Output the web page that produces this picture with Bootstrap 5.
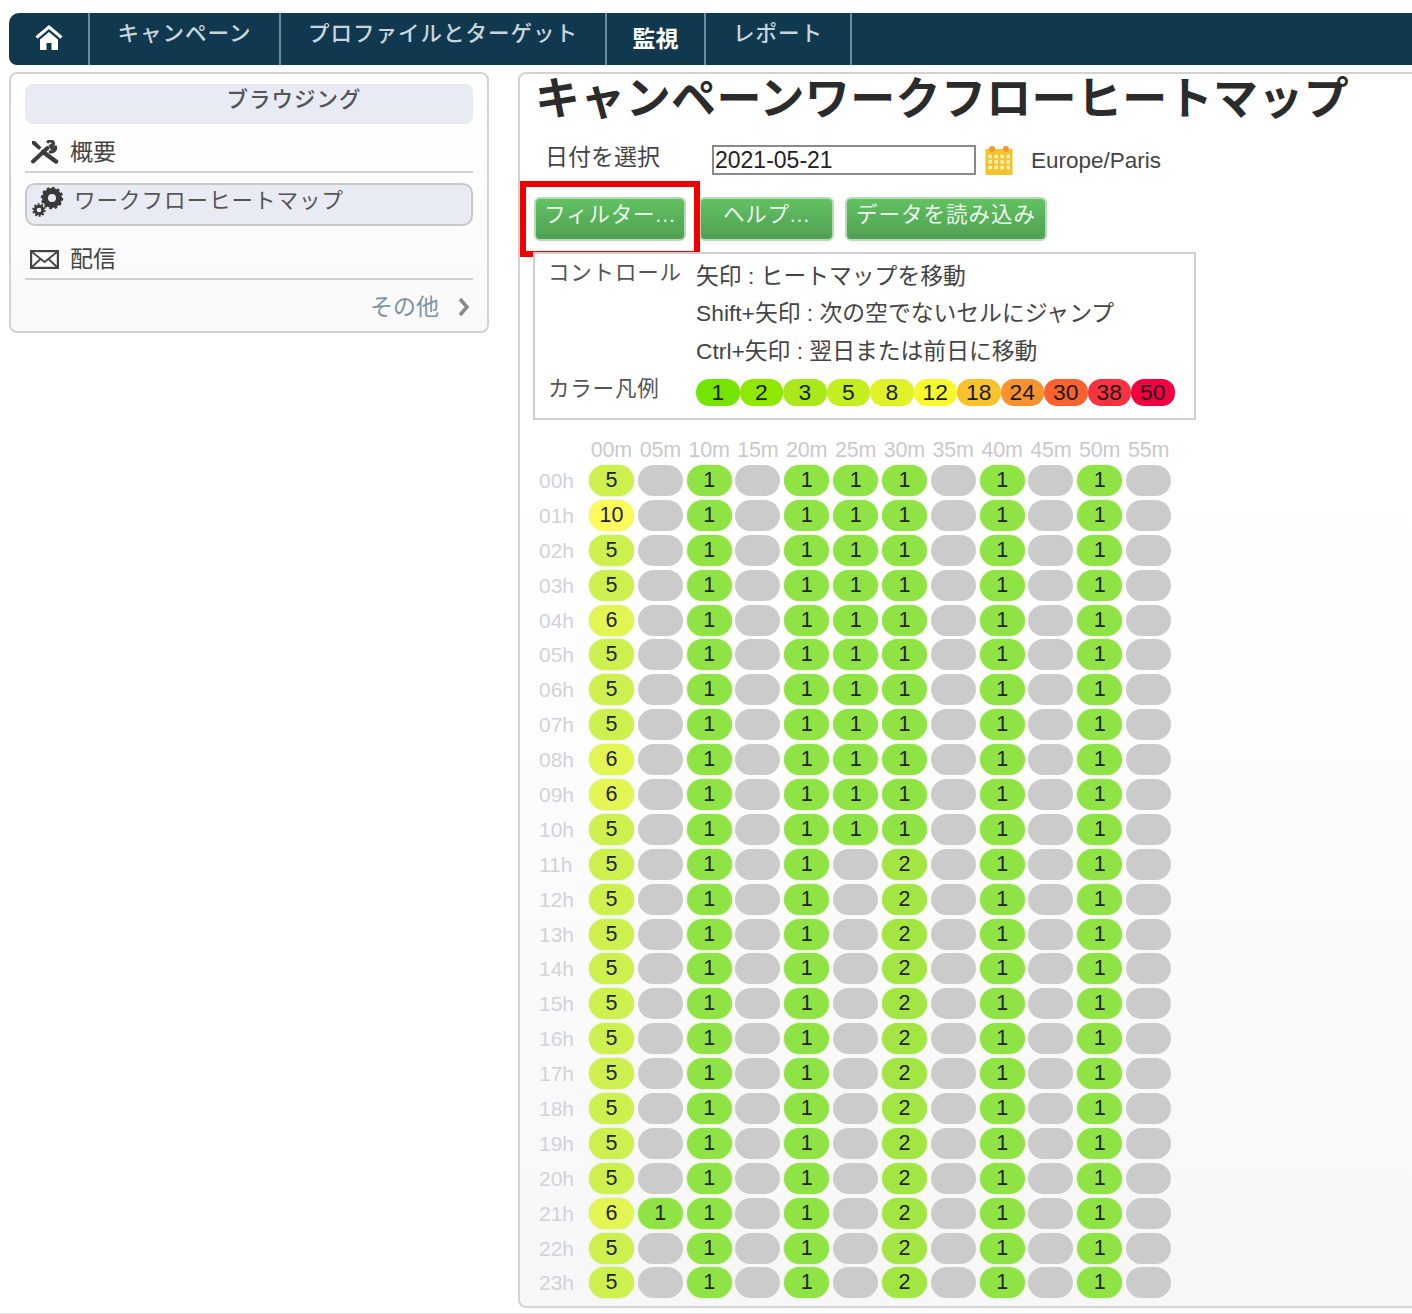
<!DOCTYPE html>
<html lang="ja">
<head>
  <meta charset="UTF-8">
  <title>キャンペーンワークフローヒートマップ</title>
  <link href="https://cdn.jsdelivr.net/npm/bootstrap@5.3.2/dist/css/bootstrap.min.css" rel="stylesheet">
  <style>
    html, body { height: 1314px; overflow: hidden; }
    body {
      font-family: "Liberation Sans", "Noto Sans CJK JP", sans-serif;
      color: #444;
      background: #fff;
    }
    .page-wrap { padding: 13px 0 0 9px; height: 1300px; border-bottom: 1px solid #e4e4e4; box-sizing: content-box; }
    .top-bar { height: 52px; background: #10384f; border-radius: 10px 0 0 8px; }
    .top-item {
      display: flex; align-items: center; justify-content: center;
      height: 52px; border-right: 2px solid #6f8a9a;
      color: #c9d5dc; font-size: 21.5px; font-weight: 500; letter-spacing: 1px;
      text-decoration: none; padding-bottom: 9px;
    }
    .top-item.on { color: #fff; font-weight: 700; letter-spacing: 0; font-size: 23px; padding-bottom: 0; }
    .w-home { width: 81px; padding-bottom: 4px; }
    .w-camp { width: 191px; }
    .w-prof { width: 326px; }
    .w-mon { width: 99px; }
    .w-rep { width: 146px; }
    .content-row { margin-top: 7px; gap: 29px; }
    .side-box {
      width: 480px; height: 261px; flex: none;
      border: 2px solid #d2d2d2; border-radius: 8px;
      padding: 10px 14px 0;
      background: linear-gradient(#fff, #f9f9f9);
    }
    .side-head {
      height: 40px; background: #e8ebf4; border-radius: 8px;
      text-align: center; padding-left: 90px;
      font-size: 21.5px; line-height: 32px; font-weight: 500; letter-spacing: 1px; color: #555;
    }
    .side-link {
      display: flex; align-items: center; gap: 11px; height: 38px; margin-top: 11px;
      border-bottom: 2px solid #d0d0d0; padding: 0 0 2px 5px;
      font-size: 23px; color: #444;
    }
    .side-link.active-item {
      height: 43px; margin-top: 10px; background: #e8ebf4;
      border: 2px solid #c8c8c8; border-radius: 10px;
      font-size: 21.5px; letter-spacing: 1px; gap: 9px; padding-bottom: 7px; color: #555;
    }
    .side-link.active-item svg { margin-bottom: -5px; }
    .side-link.after-active { margin-top: 14px; height: 40px; padding-bottom: 0; }
    .side-more {
      display: flex; justify-content: flex-end; align-items: center; gap: 19px;
      margin-top: 10px; padding-right: 3px;
      font-size: 23px; color: #7b93a5; line-height: 34px;
    }
    .main-box {
      flex: 1 1 auto; height: 1236px; margin-right: -10px;
      border: 2px solid #d2d2d2; border-radius: 8px 0 0 8px;
      background: linear-gradient(#fff 30%, #f7f7f7);
      position: relative;
    }
    .page-title {
      margin: 0 0 25px 15px; height: 46px; padding-top: 3px;
      font-size: 45px; line-height: 46px; font-weight: 700; color: #2b2b2b; white-space: nowrap; letter-spacing: .35px;
    }
    .date-row { height: 30px; margin-bottom: 22px; align-items: center; font-size: 23px; }
    .date-label { width: 167px; margin-left: 25px; margin-top: -6px; }
    .date-field {
      width: 264px; height: 30px; padding: 0 1px; border: 2px solid #8a8a8a; background: #fff;
      font: 23px/26px "Liberation Sans", sans-serif; color: #222;
    }
    .date-zone { margin-left: 17px; color: #444; font-size: 22.5px; padding-top: 2px; }
    .btn-row { height: 44px; margin: 0 0 12px 14px; }
    .btn-green {
      height: 44px; padding: 0 0 7px; color: #eef7ee;
      background: linear-gradient(#62c162, #4fa052);
      border: 2px solid #b5dcb5; border-radius: 6px;
      font-size: 21.5px; letter-spacing: .8px; line-height: 1.2;
    }
    .btn-green:hover { color: #fff; background: #4fa052; }
    .b-filter { width: 152px; margin-right: 13px; }
    .b-help { width: 135px; margin-right: 11px; }
    .b-load { width: 202px; letter-spacing: 1px; }
    .red-mark {
      position: absolute; left: 0; top: 107px; width: 180px; height: 76px;
      border: 6px solid #f00000; pointer-events: none;
    }
    .help-box {
      width: 663px; height: 168px; margin: -1px 0 0 13px; position: relative;
      border: 2px solid #cfcfcf; background: #fff; padding: 3px 14px 0 13px;
      font-size: 22.8px;
    }
    .help-line { display: flex; height: 37.5px; align-items: center; }
    .help-box .lbl { width: 148px; flex: none; color: #555; letter-spacing: .8px; margin-top: -5px; font-size: 21.5px; }
    .legend-row { display: flex; height: 35px; align-items: center; margin-top: 5px; }
    .legend-row .pills { display: flex; }
    .lg { width: 43.5px; height: 27px; border-radius: 13px; text-align: center; line-height: 27px; color: #1a1a1a; }
    .heat {
      display: grid; margin: 15px 0 0 13px;
      grid-template-columns: 54px repeat(12, 48.83px);
      grid-template-rows: 28px repeat(24, 34.9px);
      font-size: 21.5px; color: #222;
    }
    .heat-top { color: #c9c9c9; text-align: center; white-space: nowrap; letter-spacing: -.2px; line-height: 30px; }
    .heat-side { color: #d2d2d8; padding-left: 6px; line-height: 35px; font-size: 21px; }
    .pill {
      width: 45px; height: 31px; margin-left: 2px; margin-top: 2px;
      border-radius: 15.5px; text-align: center; line-height: 31px; color: #222;
    }
    .pill.lit { box-shadow: 0 0 2px rgba(190, 235, 110, .8); }
  </style>
</head>
<body>
  <div class="page-wrap">
    <nav class="top-bar d-flex">
      <a class="top-item w-home" href="#">
        <svg width="28" height="25" viewBox="0 0 28 25"><path fill="none" stroke="#fff" stroke-width="3" d="M1.500 12.500 14 2l12.500 10.500"/><path fill="#fff" d="M14 7 5 14.500V25h6.500v-7h5v7H23V14.500z"/></svg>
      </a>
      <a class="top-item w-camp" href="#">キャンペーン</a>
      <a class="top-item w-prof" href="#">プロファイルとターゲット</a>
      <a class="top-item w-mon on" href="#">監視</a>
      <a class="top-item w-rep" href="#">レポート</a>
    </nav>

    <div class="d-flex content-row">
      <aside class="side-box">
        <div class="side-head">ブラウジング</div>
        <div class="side-link">
          <svg width="29" height="24" viewBox="0 0 29 24">
            <path fill="none" stroke="#3c3c3c" stroke-width="4" stroke-linecap="round" d="M3 21.500 17.500 8"/>
            <path fill="none" stroke="#3c3c3c" stroke-width="3" d="M17 2.500c3-2.500 7-1.500 6.500 1.500L20.500 6l1.500 2.500 3.500-1.500c1 3-2 6-6.500 4.500"/>
            <path fill="#3c3c3c" d="M2 1h3l6.500 6.500-2.500 2.500L2 4z"/>
            <path fill="none" stroke="#3c3c3c" stroke-width="4.500" stroke-linecap="round" d="M13 12l13 9.500"/>
          </svg>
          <span>概要</span>
        </div>
        <div class="side-link active-item">
          <svg width="33" height="34" viewBox="0 0 33 34">
            <circle cx="20" cy="11" r="7" fill="none" stroke="#3a3a3a" stroke-width="6"/>
            <circle cx="20" cy="11" r="10" fill="none" stroke="#3a3a3a" stroke-width="2.500" stroke-dasharray="2.600 2.600"/>
            <circle cx="7" cy="23" r="3.800" fill="none" stroke="#3a3a3a" stroke-width="3"/>
            <circle cx="7" cy="23" r="5.800" fill="none" stroke="#3a3a3a" stroke-width="1.800" stroke-dasharray="2 1.600"/>
          </svg>
          <span>ワークフローヒートマップ</span>
        </div>
        <div class="side-link after-active">
          <svg width="29" height="19" viewBox="0 0 29 19"><rect x="1.100" y="1.100" width="26.800" height="16.800" fill="#fff" stroke="#444" stroke-width="2.200"/><path fill="none" stroke="#444" stroke-width="1.800" d="M2 2l12.500 10L27 2M2 17l9-8.500M27 17l-9-8.500"/></svg>
          <span>配信</span>
        </div>
        <div class="side-more">
          <span>その他</span>
          <svg width="12" height="20" viewBox="0 0 12 20"><path fill="none" stroke="#8a8a8a" stroke-width="3.500" d="M2 2l7 8-7 8"/></svg>
        </div>
      </aside>

      <main class="main-box">
        <h1 class="page-title">キャンペーンワークフローヒートマップ</h1>
        <div class="d-flex date-row">
          <span class="date-label">日付を選択</span>
          <input class="date-field" type="text" value="2021-05-21">
          <svg class="ms-2" width="30" height="31" viewBox="0 0 30 31">
            <rect x="1.500" y="4" width="27" height="26" rx="1" fill="#f5c22e"/>
            <circle cx="8" cy="4" r="3" fill="#ee9a2a"/>
            <circle cx="22" cy="4" r="3" fill="#ee9a2a"/>
            <path stroke="#fff3cc" stroke-width="3.500" stroke-dasharray="3.500 2.500" d="M4.500 11.500h22M4.500 17h22M4.500 22.500h22"/>
          </svg>
          <span class="date-zone">Europe/Paris</span>
        </div>
        <div class="d-flex btn-row">
          <button class="btn btn-green b-filter" type="button">フィルター...</button>
          <button class="btn btn-green b-help" type="button">ヘルプ...</button>
          <button class="btn btn-green b-load" type="button">データを読み込み</button>
        </div>
        <div class="red-mark"></div>
        <section class="help-box">
          <div class="help-line"><span class="lbl">コントロール</span><span>矢印 : ヒートマップを移動</span></div>
          <div class="help-line"><span class="lbl"></span><span>Shift+矢印 : 次の空でないセルにジャンプ</span></div>
          <div class="help-line"><span class="lbl"></span><span>Ctrl+矢印 : 翌日または前日に移動</span></div>
          <div class="legend-row"><span class="lbl">カラー凡例</span><div class="pills" id="legend"></div></div>
        </section>
        <div class="heat" id="heat"></div>
      </main>
    </div>
  </div>

  <script src="https://cdn.jsdelivr.net/npm/bootstrap@5.3.2/dist/js/bootstrap.bundle.min.js"></script>
  <script>
    const legendColors = [[1,"#74e400"],[2,"#90e800"],[3,"#aae81a"],[5,"#c4ee20"],[8,"#dff228"],[12,"#f8f82e"],[18,"#f8c22e"],[24,"#f8922e"],[30,"#f8622e"],[38,"#f8323e"],[50,"#f00040"]];
    document.getElementById("legend").innerHTML = legendColors
      .map(([n, c]) => `<div class="lg" style="background:${c}">${n}</div>`).join("");

    const cellColors = { 1: "#8fe345", 2: "#a3e644", 5: "#cdf04f", 6: "#e3f552", 10: "#fdfb5b" };
    const pad = n => String(n).padStart(2, "0");

    function cellValue(h, m) {
      if (m === 0) return h === 1 ? 10 : [4, 8, 9, 21].includes(h) ? 6 : 5;
      if (m === 1) return h === 21 ? 1 : 0;
      if ([2, 4, 8, 10].includes(m)) return 1;
      if (m === 5) return h <= 10 ? 1 : 0;
      if (m === 6) return h <= 10 ? 1 : 2;
      return 0;
    }

    let html = '<div class="heat-top"></div>';
    for (let m = 0; m < 12; m++) html += `<div class="heat-top">${pad(m * 5)}m</div>`;
    for (let h = 0; h < 24; h++) {
      html += `<div class="heat-side">${pad(h)}h</div>`;
      for (let m = 0; m < 12; m++) {
        const v = cellValue(h, m);
        html += v
          ? `<div class="pill lit" style="background:${cellColors[v]}">${v}</div>`
          : `<div class="pill" style="background:#cbcbcb"></div>`;
      }
    }
    document.getElementById("heat").innerHTML = html;
  </script>
</body>
</html>
